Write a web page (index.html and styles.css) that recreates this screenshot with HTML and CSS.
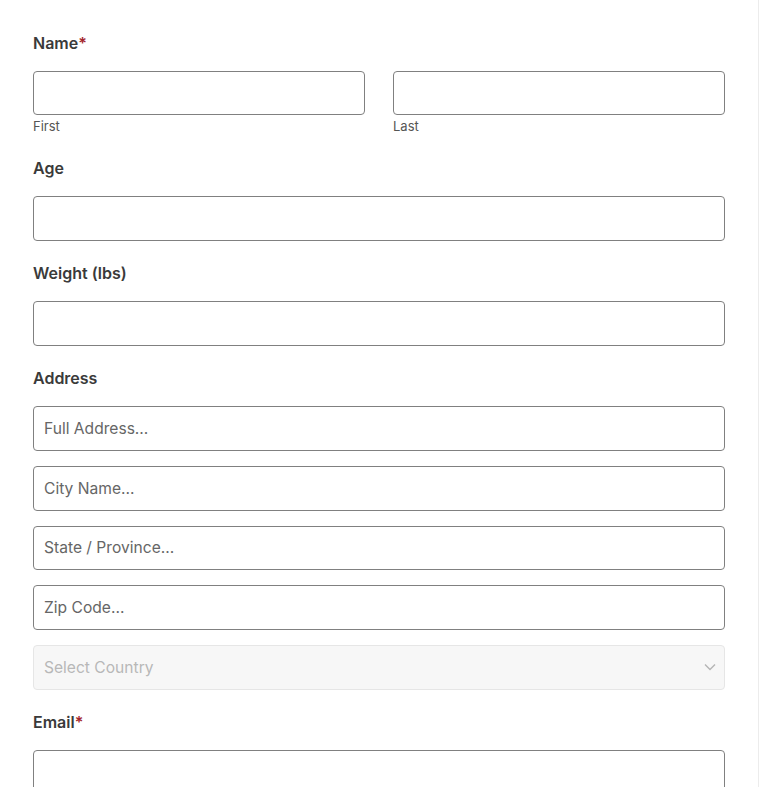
FILE: index.html
```html
<!DOCTYPE html>
<html>
<head>
<meta charset="utf-8">
<link rel="stylesheet" href="styles.css">
</head>
<body>
<div class="page">
  <form class="form">
    <div class="field">
      <div class="label">Name<span class="req">*</span></div>
      <div class="name-row">
        <div class="sub">
          <div class="input"></div>
          <div class="sublabel">First</div>
        </div>
        <div class="sub">
          <div class="input"></div>
          <div class="sublabel">Last</div>
        </div>
      </div>
    </div>
    <div class="field">
      <div class="label">Age</div>
      <div class="input"></div>
    </div>
    <div class="field">
      <div class="label">Weight (lbs)</div>
      <div class="input"></div>
    </div>
    <div class="field">
      <div class="label">Address</div>
      <div class="stack">
        <div class="input"><span class="ph">Full Address...</span></div>
        <div class="input"><span class="ph">City Name...</span></div>
        <div class="input"><span class="ph">State / Province...</span></div>
        <div class="input"><span class="ph">Zip Code...</span></div>
        <div class="input select"><span class="ph-dis">Select Country</span>
          <svg class="chev" width="12" height="8" viewBox="0 0 12 8"><path d="M1 1.5l5 5 5-5" fill="none" stroke="#b5b5b5" stroke-width="1.4"/></svg>
        </div>
      </div>
    </div>
    <div class="field">
      <div class="label">Email<span class="req">*</span></div>
      <div class="input"></div>
    </div>
  </form>
</div>
</body>
</html>
```
FILE: styles.css
```css
html, body {
  margin: 0;
  padding: 0;
  background: #fff;
}
body {
  font-family: Inter, "Noto Sans", sans-serif;
  color: #3a3a3a;
}
.page {
  width: 759px;
  min-height: 787px;
  border-right: 1px solid #ececec;
  box-sizing: border-box;
  padding: 31px 33px 0 33px;
  overflow: hidden;
}
.form {
  display: flex;
  flex-direction: column;
  gap: 20px;
}
.field {
  display: flex;
  flex-direction: column;
}
.label {
  font-size: 16px;
  font-weight: 600;
  line-height: 24px;
  color: #3a3a3a;
  margin-bottom: 16px;
}
.req {
  color: #a4262c;
}
.name-row {
  display: grid;
  grid-template-columns: 1fr 1fr;
  column-gap: 28px;
}
.sub {
  display: flex;
  flex-direction: column;
}
.sublabel {
  font-size: 13px;
  line-height: 20px;
  color: #555;
  margin-top: 1px;
}
.input {
  height: 45px;
  box-sizing: border-box;
  border: 1px solid #808080;
  border-radius: 4px;
  background: #fff;
  display: flex;
  align-items: center;
  padding: 0 10px;
}
.name-row .input {
  height: 44px;
}
.stack {
  display: flex;
  flex-direction: column;
  gap: 15px;
}
.stack .input {
  height: 44.75px;
}
.ph {
  font-size: 15.6px;
  color: #666;
}
.select {
  background: #f7f7f7;
  border-color: #e6e6e6;
  justify-content: space-between;
  padding-right: 8px;
}
.ph-dis {
  font-size: 15.6px;
  color: #b8b8b8;
}
```
